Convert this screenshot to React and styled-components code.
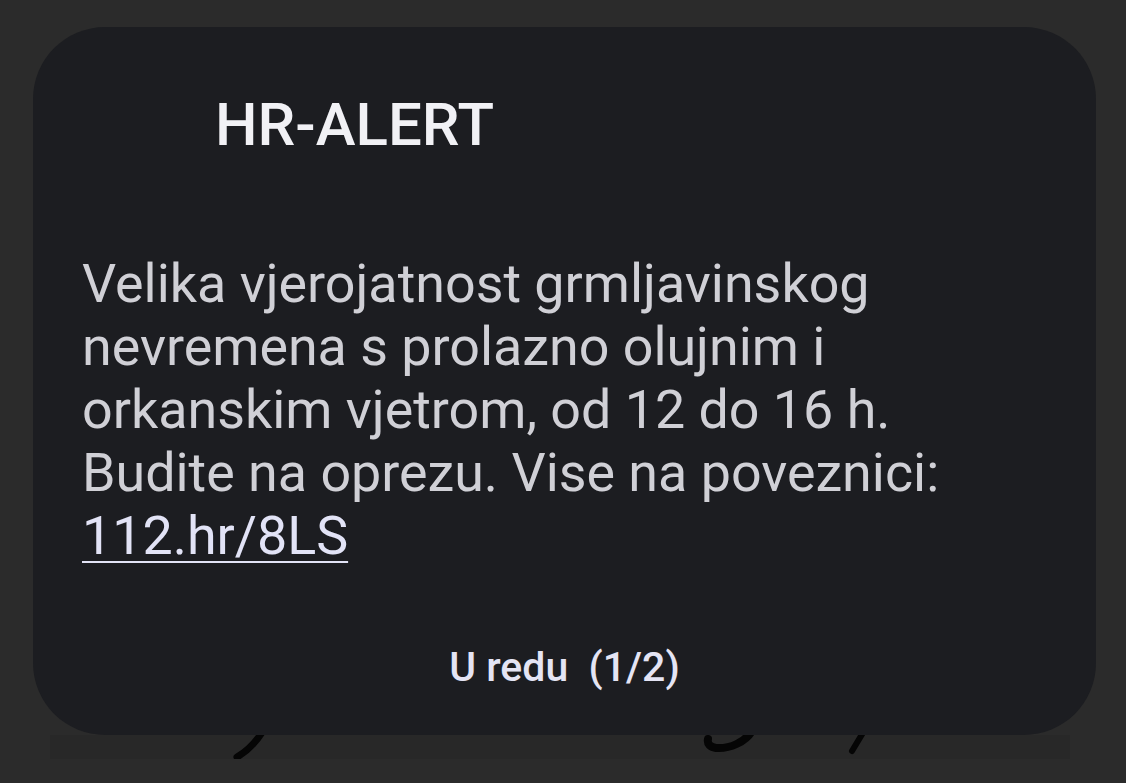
import React from 'react'
import styled, { createGlobalStyle } from 'styled-components'

const GlobalStyle = createGlobalStyle`
  html, body {
    margin: 0;
    padding: 0;
    background: #2b2b2b;
  }
  body {
    font-family: Roboto, 'Noto Sans', sans-serif;
  }
`

// the dialog sits over a faded strip of the screen below it
const Stage = styled.div`
  width: 1126px;
  height: 783px;
  overflow: hidden;
  display: grid;
  grid-template-columns: minmax(0, 1fr);
  grid-template-rows: minmax(0, 1fr);
`

const Backdrop = styled.div`
  grid-area: 1 / 1;
  align-self: start;
  justify-self: start;
  margin: 733px 0 0 50px;
  width: 1020px;
  height: 26px;
  background: linear-gradient(#2b2b2b 0 2px, #282828 2px);
`

const Scribbles = styled.svg`
  display: block;
`

const Dialog = styled.div`
  grid-area: 1 / 1;
  align-self: start;
  justify-self: start;
  margin: 27px 0 0 33px;
  width: 1063px;
  height: 708px;
  box-sizing: border-box;
  background: #1c1d21;
  border-radius: 72px;
  display: flex;
  flex-direction: column;
  position: relative;
  z-index: 1;
`

const Title = styled.h1`
  margin: 0;
  padding: 56px 0 0 182px;
  font-size: 60px;
  line-height: 84px;
  font-weight: 500;
  color: #f1f1f5;
`

const Message = styled.p`
  margin: 0;
  padding: 85px 80px 0 49px;
  font-size: 53.8px;
  line-height: 63px;
  font-weight: 400;
  color: #d0d0d6;
`

const Link = styled.a`
  color: #e2e3f6;
  text-decoration: underline;
  text-decoration-thickness: 2px;
  text-underline-offset: 7px;
`

const Actions = styled.div`
  margin-top: auto;
  padding-bottom: 40px;
  display: flex;
  justify-content: center;
`

const Button = styled.button`
  background: none;
  border: none;
  padding: 0;
  font-family: Roboto, sans-serif;
  font-size: 41px;
  line-height: 56px;
  font-weight: 500;
  color: #e4e4f4;
  white-space: pre;
  cursor: pointer;
`

export default function App() {
  return (
    <>
      <GlobalStyle />
      <Stage>
        <Backdrop>
          <Scribbles width="1020" height="26" viewBox="50 733 1020 26">
            <g stroke="#050505" strokeLinecap="round" fill="none">
              <path d="M263 731 C256 742 248 751 237 757" strokeWidth="7" />
              <path d="M752 731 C745 742 730 749 716 748 C710 747 707 744 708 739" strokeWidth="8" />
              <path d="M864 731 L852 751" strokeWidth="6" />
            </g>
          </Scribbles>
        </Backdrop>
        <Dialog>
          <Title>HR-ALERT</Title>
          <Message>
            Velika vjerojatnost grmljavinskog nevremena s prolazno olujnim i
            orkanskim vjetrom, od 12 do 16 h. Budite na oprezu. Vise na
            poveznici: <Link href="#">112.hr/8LS</Link>
          </Message>
          <Actions>
            <Button>{'U redu  (1/2)'}</Button>
          </Actions>
        </Dialog>
      </Stage>
    </>
  )
}
